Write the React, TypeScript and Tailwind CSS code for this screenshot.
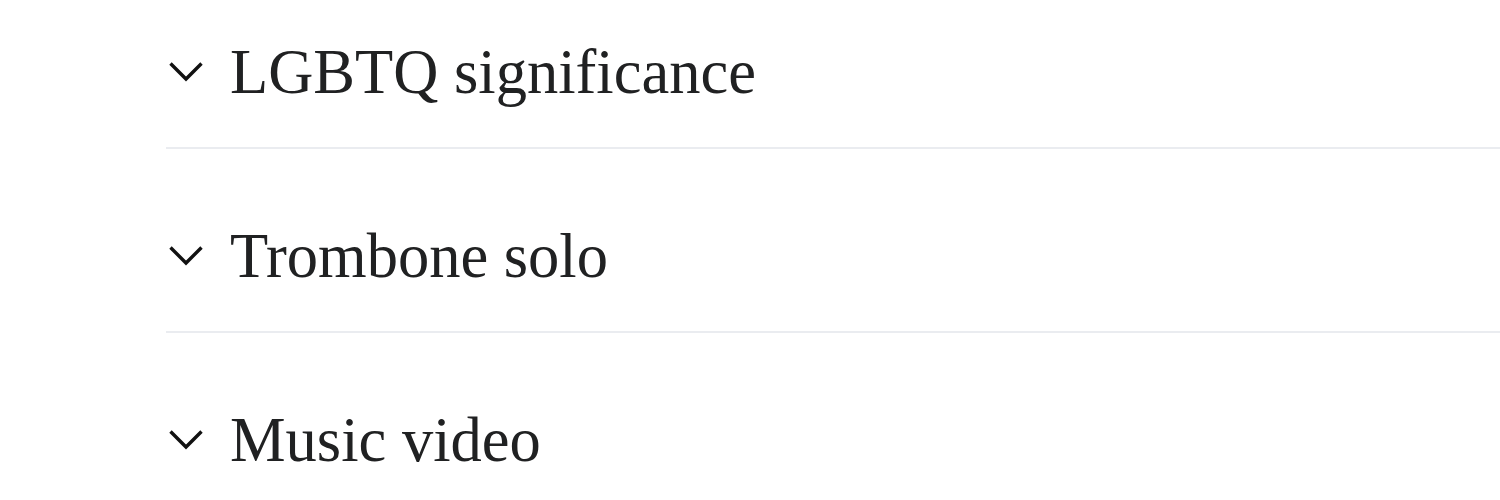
import React from "react";

const sections = ["LGBTQ significance", "Trombone solo", "Music video"];

function Chevron() {
  return (
    <svg width="40" height="40" viewBox="0 0 40 40" fill="none" aria-hidden className="shrink-0">
      <polyline points="4.5,11.5 20,27 35.5,11.5" stroke="#111" strokeWidth="3.4" />
    </svg>
  );
}

export default function App() {
  return (
    <div className="min-h-[500px] overflow-hidden bg-white pl-[166px]">
      {sections.map((title, i) => (
        <div
          key={title}
          className={
            i === 0
              ? "flex items-center gap-[24px] border-b-2 border-[#eaecf0] pb-[40px] pt-[37px]"
              : "flex items-center gap-[24px] border-b-2 border-[#eaecf0] pb-[40px] pt-[72px]"
          }
        >
          <Chevron />
          <h2 className="font-['Liberation_Serif',serif] text-[62.5px] leading-[70px] font-normal text-[#202122]">
            {title}
          </h2>
        </div>
      ))}
    </div>
  );
}
